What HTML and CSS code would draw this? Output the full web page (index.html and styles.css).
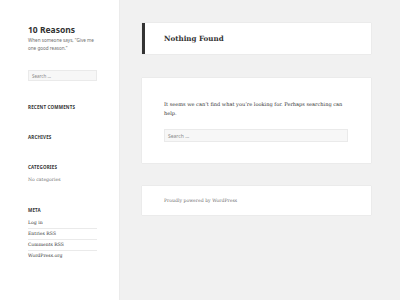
FILE: index.html
```html
<!DOCTYPE html>
<html lang="en">
<head>
<meta charset="utf-8">
<title>Nothing Found – 10 Reasons</title>
<link rel="stylesheet" href="styles.css">
</head>
<body>
<div class="page">
  <aside class="sidebar">
    <header class="site-header">
      <p class="site-title">10 Reasons</p>
      <p class="site-desc">When someone says, “Give me one good reason.”</p>
    </header>
    <div class="search-box small"><span>Search …</span></div>
    <section class="widget">
      <h2 class="widget-title">Recent Comments</h2>
    </section>
    <section class="widget">
      <h2 class="widget-title">Archives</h2>
    </section>
    <section class="widget">
      <h2 class="widget-title">Categories</h2>
      <p class="widget-text">No categories</p>
    </section>
    <section class="widget">
      <h2 class="widget-title">Meta</h2>
      <ul class="meta-list">
        <li>Log in</li>
        <li>Entries RSS</li>
        <li>Comments RSS</li>
        <li>WordPress.org</li>
      </ul>
    </section>
  </aside>
  <main class="main">
    <header class="card page-header">
      <h1 class="page-title">Nothing Found</h1>
    </header>
    <section class="card content">
      <p class="content-text">It seems we can’t find what you’re looking for. Perhaps searching can help.</p>
      <div class="search-box large"><span>Search …</span></div>
    </section>
    <footer class="card footer">
      <p class="footer-text">Proudly powered by WordPress</p>
    </footer>
  </main>
</div>
</body>
</html>
```
FILE: styles.css
```css
html, body {
  margin: 0;
  padding: 0;
  height: 100%;
}
body {
  background: #f1f1f1;
  font-family: "DejaVu Serif", serif;
  color: #333;
}
p, h1, h2, ul { margin: 0; padding: 0; }
.page {
  display: flex;
  min-height: 300px;
}
.sidebar {
  width: 119px;
  flex: none;
  background: #fff;
  box-shadow: 0 0 1px rgba(0,0,0,0.15);
  padding: 24px 22px 0 28px;
  box-sizing: border-box;
}
.site-title {
  font-family: "Noto Sans", sans-serif;
  font-weight: 700;
  font-size: 8.5px;
  line-height: 12px;
  color: #333;
}
.site-desc {
  margin-top: 1px;
  font-family: "Noto Sans", sans-serif;
  font-size: 4.6px;
  line-height: 7.5px;
  color: #707070;
}
.search-box {
  background: #f7f7f7;
  border: 1px solid #eaeaea;
  box-sizing: border-box;
  display: flex;
  align-items: center;
  font-family: "Noto Sans", sans-serif;
  color: #8a8a8a;
}
.search-box.small {
  margin-top: 18px;
  height: 11px;
  font-size: 4.5px;
  padding-left: 3px;
}
.search-box.large {
  margin-top: 11px;
  width: 184px;
  height: 13px;
  font-size: 5px;
  padding-left: 3px;
}
.widget { margin-top: 22px; }
.widget-title {
  font-family: "Noto Sans", sans-serif;
  font-weight: 700;
  font-size: 4.5px;
  line-height: 8px;
  letter-spacing: 0.04em;
  text-transform: uppercase;
  color: #333;
}
.widget-text {
  margin-top: 5px;
  font-size: 4.6px;
  line-height: 8px;
  color: #707070;
}
.meta-list {
  list-style: none;
  margin-top: 4px;
}
.meta-list li {
  font-size: 4.6px;
  line-height: 10px;
  border-top: 1px solid #eaeaea;
  color: #333;
}
.meta-list li:first-child { border-top: 0; }
.main {
  flex: 1;
  padding: 23px 0 0 23px;
}
.card {
  width: 229px;
  background: #fff;
  box-shadow: 0 0 1px rgba(0,0,0,0.15);
  box-sizing: border-box;
}
.page-header {
  height: 31px;
  border-left: 3px solid #333;
  padding-left: 19px;
  display: flex;
  align-items: center;
}
.page-title {
  font-size: 7.1px;
  font-weight: 700;
  color: #333;
}
.content {
  margin-top: 24px;
  height: 85px;
  padding: 22px 0 0 22px;
}
.content-text {
  font-size: 5.05px;
  line-height: 9px;
  color: #333;
  width: 186px;
}
.footer {
  margin-top: 23px;
  height: 29px;
  padding-left: 22px;
  display: flex;
  align-items: center;
}
.footer-text {
  font-size: 4.6px;
  color: #707070;
}
```
